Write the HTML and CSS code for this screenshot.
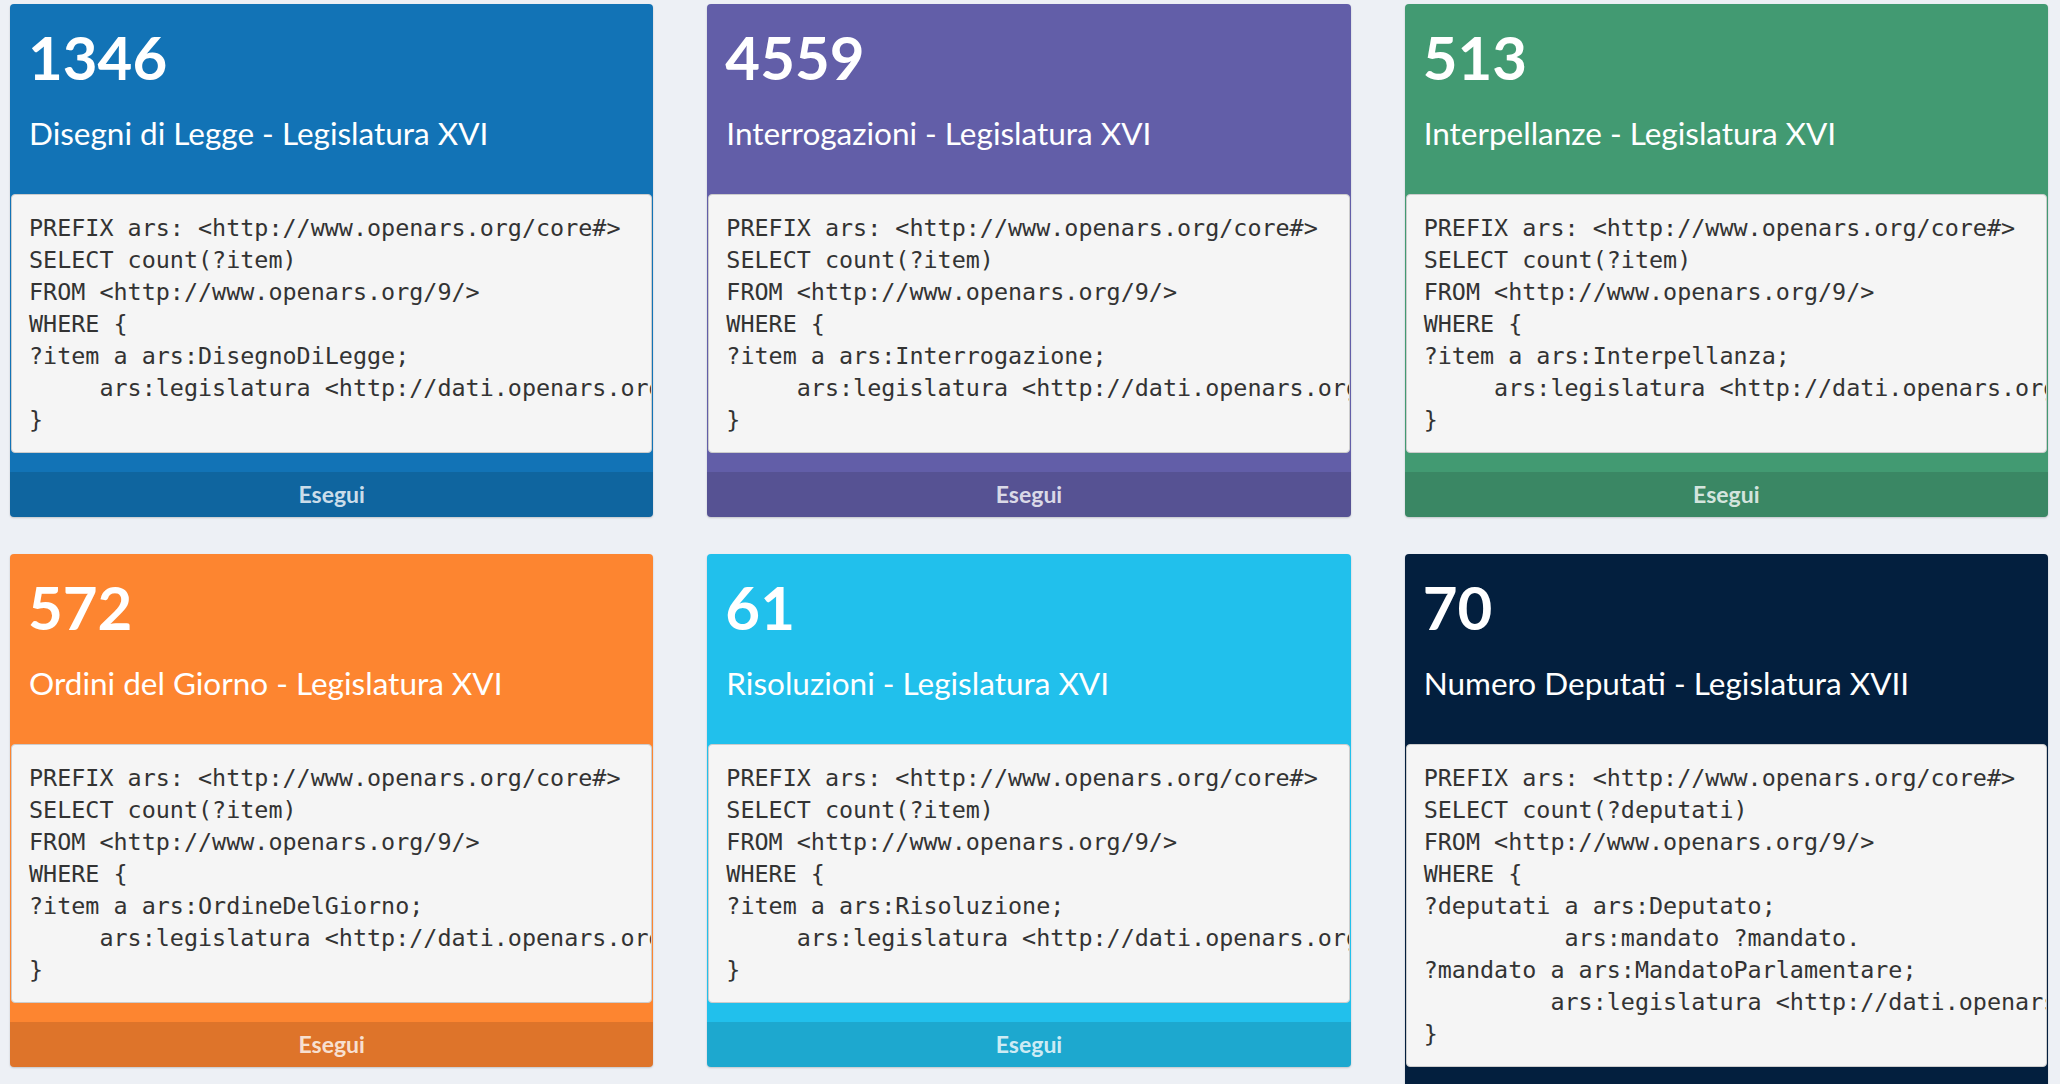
FILE: index.html
```html
<!DOCTYPE html>
<html lang="it">
<head>
<meta charset="utf-8">
<title>OpenARS SPARQL</title>
<link rel="stylesheet" href="styles.css">
</head>
<body>
<div class="grid">
  <div class="card c-blue">
    <div class="head">
      <div class="num">1346</div>
      <div class="title">Disegni di Legge - Legislatura XVI</div>
    </div>
    <pre class="query">PREFIX ars: &lt;http://www.openars.org/core#&gt;
SELECT count(?item)
FROM &lt;http://www.openars.org/9/&gt;
WHERE {
?item a ars:DisegnoDiLegge;
     ars:legislatura &lt;http://dati.openars.org/legislatura/16&gt;.
}</pre>
    <div class="run">Esegui</div>
  </div>

  <div class="card c-purple">
    <div class="head">
      <div class="num">4559</div>
      <div class="title">Interrogazioni - Legislatura XVI</div>
    </div>
    <pre class="query">PREFIX ars: &lt;http://www.openars.org/core#&gt;
SELECT count(?item)
FROM &lt;http://www.openars.org/9/&gt;
WHERE {
?item a ars:Interrogazione;
     ars:legislatura &lt;http://dati.openars.org/legislatura/16&gt;.
}</pre>
    <div class="run">Esegui</div>
  </div>

  <div class="card c-green">
    <div class="head">
      <div class="num">513</div>
      <div class="title">Interpellanze - Legislatura XVI</div>
    </div>
    <pre class="query">PREFIX ars: &lt;http://www.openars.org/core#&gt;
SELECT count(?item)
FROM &lt;http://www.openars.org/9/&gt;
WHERE {
?item a ars:Interpellanza;
     ars:legislatura &lt;http://dati.openars.org/legislatura/16&gt;.
}</pre>
    <div class="run">Esegui</div>
  </div>

  <div class="card c-orange">
    <div class="head">
      <div class="num">572</div>
      <div class="title">Ordini del Giorno - Legislatura XVI</div>
    </div>
    <pre class="query">PREFIX ars: &lt;http://www.openars.org/core#&gt;
SELECT count(?item)
FROM &lt;http://www.openars.org/9/&gt;
WHERE {
?item a ars:OrdineDelGiorno;
     ars:legislatura &lt;http://dati.openars.org/legislatura/16&gt;.
}</pre>
    <div class="run">Esegui</div>
  </div>

  <div class="card c-cyan">
    <div class="head">
      <div class="num">61</div>
      <div class="title">Risoluzioni - Legislatura XVI</div>
    </div>
    <pre class="query">PREFIX ars: &lt;http://www.openars.org/core#&gt;
SELECT count(?item)
FROM &lt;http://www.openars.org/9/&gt;
WHERE {
?item a ars:Risoluzione;
     ars:legislatura &lt;http://dati.openars.org/legislatura/16&gt;.
}</pre>
    <div class="run">Esegui</div>
  </div>

  <div class="card c-navy">
    <div class="head">
      <div class="num">70</div>
      <div class="title">Numero Deputati - Legislatura XVII</div>
    </div>
    <pre class="query">PREFIX ars: &lt;http://www.openars.org/core#&gt;
SELECT count(?deputati)
FROM &lt;http://www.openars.org/9/&gt;
WHERE {
?deputati a ars:Deputato;
          ars:mandato ?mandato.
?mandato a ars:MandatoParlamentare;
         ars:legislatura &lt;http://dati.openars.org/legislatura/17&gt;.
}</pre>
    <div class="run">Esegui</div>
  </div>
</div>
</body>
</html>
```

FILE: styles.css
```css
html, body {
  margin: 0;
  padding: 0;
}

body {
  background: #edf0f5;
  font-family: Lato, "Open Sans", "Liberation Sans", sans-serif;
  color: #fff;
}

.grid {
  display: grid;
  grid-template-columns: repeat(3, 1fr);
  column-gap: 54px;
  row-gap: 37px;
  padding: 4px 12px 40px 10px;
  align-items: start;
}

.card {
  border-radius: 4px;
  overflow: hidden;
  box-shadow: 0 1px 2px rgba(0, 0, 0, 0.18);
}

.head {
  padding: 23px 20px 41px 18px;
}

.num {
  font-size: 60px;
  font-weight: 700;
  line-height: 60px;
  height: 60px;
}

.title {
  margin-top: 26px;
  padding-left: 1px;
  font-size: 31.5px;
  font-weight: 400;
  line-height: 40px;
  height: 40px;
  white-space: nowrap;
}

.query {
  margin: 0 1px 19px 1px;
  padding: 17px 18px 16px 17px;
  background: #f5f5f5;
  border: 1px solid #cccccc;
  border-radius: 4px;
  color: #333333;
  font-family: "DejaVu Sans Mono", "Liberation Mono", monospace;
  font-size: 23.4px;
  line-height: 32px;
  white-space: pre;
  overflow: hidden;
}

.run {
  height: 45px;
  line-height: 45px;
  text-align: center;
  font-size: 23px;
  font-weight: 700;
  color: rgba(255, 255, 255, 0.8);
  background: rgba(0, 0, 0, 0.12);
}

.c-blue { background: #1273b6; }
.c-purple { background: #625ea8; }
.c-green { background: #429a72; }
.c-orange { background: #fd8530; }
.c-cyan { background: #21c0ec; }
.c-navy { background: #031f3e; }
```
